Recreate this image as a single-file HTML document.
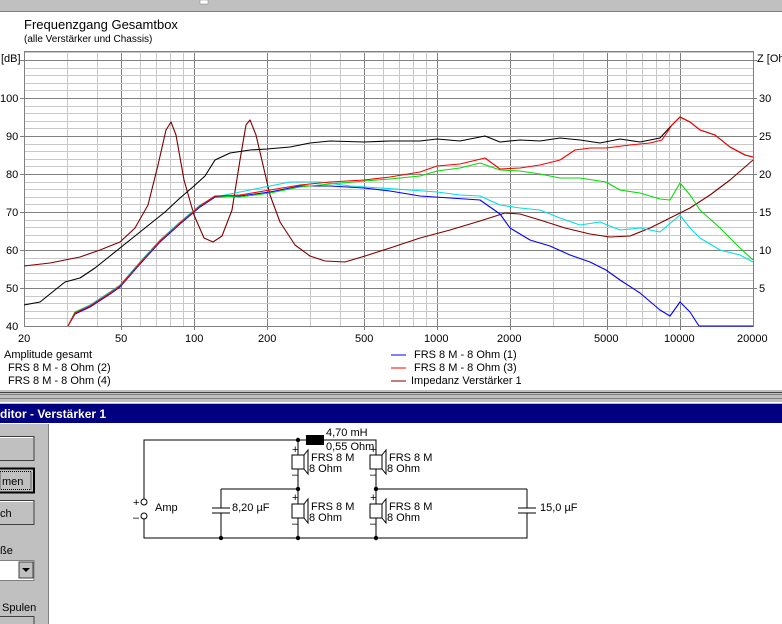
<!DOCTYPE html>
<html><head><meta charset="utf-8"><style>
body{margin:0;width:782px;height:624px;overflow:hidden;background:#fff;font-family:"Liberation Sans",sans-serif}
svg{display:block}
text{font-family:"Liberation Sans",sans-serif;font-size:11px;fill:#000}
</style></head><body>
<svg width="782" height="624" viewBox="0 0 782 624" xmlns="http://www.w3.org/2000/svg">
<rect x="0" y="0" width="782" height="12" fill="#c0c0c0"/>
<line x1="0" y1="11.5" x2="782" y2="11.5" stroke="#808080"/>
<rect x="200" y="0" width="8" height="4" fill="#fff" stroke="#808080" stroke-width="0.5"/>
<text x="24" y="29" style="font-size:13px">Frequenzgang Gesamtbox</text>
<text x="24" y="42" style="font-size:10px">(alle Verstärker und Chassis)</text>
<text x="1" y="62">[dB]</text>
<text x="757" y="62">Z [Ohm]</text>
<g id="grid"></g>
<rect x="24.5" y="51.5" width="729" height="275" fill="none" stroke="#808080"/>
<g font-size="11">
<text x="0" y="102">100</text><text x="6" y="140">90</text><text x="6" y="178">80</text><text x="6" y="216">70</text><text x="6" y="254">60</text><text x="6" y="292">50</text><text x="6" y="330">40</text>
<text x="759" y="102">30</text><text x="759" y="140">25</text><text x="759" y="178">20</text><text x="759" y="216">15</text><text x="759" y="254">10</text><text x="759" y="292">5</text>
<text x="18" y="342">20</text><text x="115" y="342">50</text><text x="185" y="342">100</text><text x="258" y="342">200</text><text x="355" y="342">500</text><text x="424" y="342">1000</text><text x="497" y="342">2000</text><text x="594" y="342">5000</text><text x="664" y="342">10000</text><text x="737" y="342">20000</text>
</g>
<g fill="none" stroke-width="1.1" stroke-linejoin="round">
<polyline stroke="#800000" points="24,266 50,263 80,257 100,250 120,242 135,228 148,205 158,165 166,130 171,122 176,135 184,180 194,215 204,238 213,242 222,236 232,210 240,160 246,125 250,120 256,135 263,165 270,195 280,222 295,245 310,256 325,261 345,262 365,256 390,248 420,238 450,230 480,221 505,213 520,214 540,220 565,228 590,234 610,237 630,236 650,228 670,218 690,208 710,195 730,180 753,160"/>
<polyline stroke="#000" points="24,305 40,302 55,290 65,282 80,278 95,268 110,256 120,248 135,236 150,224 165,212 180,198 194,186 205,176 215,160 230,153 250,150 267,149 290,147 310,143 330,141 364,142 390,141 420,141 437,139 460,141 485,136 500,142 520,140 540,141 560,138 580,140 600,143 620,139 640,142 660,138 672,125 680,117 690,122 700,130 715,135 730,147 745,155 753,157"/>
<polyline stroke="#00e0e0" points="68,326 75,312 90,305 110,292 120,285 140,262 160,240 180,222 200,205 215,197 235,193 260,188 290,182 320,182 350,186 380,188 410,190 437,192 460,195 480,196 500,205 520,208 540,210 560,218 580,225 600,222 620,230 640,228 660,232 680,215 690,228 700,238 720,250 740,255 753,262"/>
<polyline stroke="#0000ff" points="68,326 75,314 90,307 110,294 120,287 140,264 160,242 180,224 200,207 215,197 240,196 270,192 300,186 330,186 364,188 390,191 420,196 450,198 480,200 500,214 510,228 530,240 550,246 570,255 590,262 606,270 620,280 640,293 660,310 670,316 680,302 690,312 699,326 753,326"/>
<polyline stroke="#00e000" points="68,326 75,312 90,306 110,293 120,286 140,263 160,241 180,223 200,206 215,196 240,197 270,193 300,187 330,184 364,181 390,179 420,176 437,171 460,168 480,163 500,170 520,171 540,174 560,178 580,178 606,182 620,190 640,193 660,199 670,200 680,183 690,195 700,210 720,228 740,248 753,260"/>
<polyline stroke="#ff0000" points="68,326 75,313 90,306 110,293 120,286 140,263 160,241 180,223 200,206 215,196 240,195 270,190 300,185 330,182 364,180 390,177 420,172 437,166 460,164 485,158 500,169 520,168 540,165 560,160 575,150 590,148 606,148 630,145 650,143 662,140 672,125 680,117 690,122 700,130 715,135 730,147 745,155 753,157"/>
</g>
<g font-size="10">
<text x="4" y="358">Amplitude gesamt</text><text x="8" y="371">FRS 8 M - 8 Ohm (2)</text><text x="8" y="384">FRS 8 M - 8 Ohm (4)</text>
<line x1="391" y1="355" x2="406" y2="355" stroke="#0000ff"/><text x="414" y="358">FRS 8 M - 8 Ohm (1)</text>
<line x1="391" y1="368" x2="406" y2="368" stroke="#ff0000"/><text x="414" y="371">FRS 8 M - 8 Ohm (3)</text>
<line x1="391" y1="381" x2="406" y2="381" stroke="#800000"/><text x="411" y="384">Impedanz Verstärker 1</text>
</g>
<rect x="0" y="390" width="782" height="14" fill="#c0c0c0"/>
<line x1="0" y1="392.5" x2="782" y2="392.5" stroke="#404040"/>
<line x1="0" y1="394.5" x2="782" y2="394.5" stroke="#808080"/>
<line x1="0" y1="398.5" x2="782" y2="398.5" stroke="#808080"/>
<line x1="0" y1="402.5" x2="782" y2="402.5" stroke="#fff"/>
<rect x="0" y="404" width="782" height="19" fill="#000080"/>
<text x="0" y="418" style="fill:#fff;font-weight:bold;font-size:12px">ditor - Verstärker 1</text>
<rect x="0" y="424" width="49" height="200" fill="#c0c0c0"/>
<line x1="48.5" y1="424" x2="48.5" y2="624" stroke="#808080"/>
<line x1="49.5" y1="424" x2="49.5" y2="624" stroke="#fff"/>
<g stroke-width="1">
<rect x="-2" y="436.5" width="36" height="24" fill="#c0c0c0" stroke="#404040"/><line x1="0" y1="437.5" x2="33" y2="437.5" stroke="#fff"/>
<rect x="-2" y="468.5" width="36" height="24" fill="#c0c0c0" stroke="#000" stroke-width="2"/><rect x="0" y="471.5" width="31" height="18" fill="none" stroke="#000" stroke-dasharray="1 1"/>
<rect x="-2" y="500.5" width="36" height="24" fill="#c0c0c0" stroke="#404040"/><line x1="0" y1="501.5" x2="33" y2="501.5" stroke="#fff"/>
<rect x="-2" y="560.5" width="36" height="20" fill="#fff" stroke="#808080"/>
<rect x="19" y="562" width="14" height="16" fill="#c0c0c0" stroke="#404040"/>
<polygon points="22,568 30,568 26,572" fill="#000"/>
<rect x="-2" y="616.5" width="36" height="20" fill="#c0c0c0" stroke="#404040"/>
</g>
<text x="2" y="485" style="font-size:11px">men</text>
<text x="0" y="517" style="font-size:11px">ch</text>
<text x="0" y="554" style="font-size:11px">ße</text>
<text x="2" y="611" style="font-size:11px">Spulen</text>
<g stroke="#000" fill="none" stroke-width="1">
<polyline points="144,502 144,440 376,440 376,455"/>
<polyline points="144,516 144,538 527,538 527,513"/>
<line x1="527" y1="508" x2="527" y2="489"/>
<line x1="221" y1="489" x2="298" y2="489"/>
<line x1="376" y1="489" x2="527" y2="489"/>
<line x1="221" y1="489" x2="221" y2="508"/><line x1="221" y1="513" x2="221" y2="538"/>
<line x1="212" y1="508" x2="230" y2="508"/><line x1="212" y1="513" x2="230" y2="513"/>
<line x1="518" y1="508" x2="536" y2="508"/><line x1="518" y1="513" x2="536" y2="513"/>
<line x1="298" y1="440" x2="298" y2="538"/>
<line x1="376" y1="455" x2="376" y2="538"/>
<circle cx="144" cy="502" r="3" fill="#fff"/><circle cx="144" cy="516" r="3" fill="#fff"/>
</g>
<rect x="306" y="435" width="18" height="10" fill="#000"/>
<g fill="#000">
<circle cx="298" cy="440" r="2.2"/><circle cx="298" cy="489" r="2.2"/><circle cx="298" cy="538" r="2.2"/>
<circle cx="376" cy="489" r="2.2"/><circle cx="376" cy="538" r="2.2"/><circle cx="221" cy="538" r="2.2"/>
</g>
<g stroke="#000" fill="#fff">
<rect x="292" y="455" width="12" height="14"/><polyline points="304,455 308,450 308,474 304,469" fill="none"/>
<rect x="292" y="504" width="12" height="14"/><polyline points="304,504 308,499 308,523 304,518" fill="none"/>
<rect x="370" y="455" width="12" height="14"/><polyline points="382,455 386,450 386,474 382,469" fill="none"/>
<rect x="370" y="504" width="12" height="14"/><polyline points="382,504 386,499 386,523 382,518" fill="none"/>
</g>
<g font-size="9">
<text x="292" y="453">+</text><text x="292" y="478">–</text><text x="292" y="501">+</text><text x="292" y="527">–</text>
<text x="370" y="453">+</text><text x="370" y="478">–</text><text x="370" y="501">+</text><text x="370" y="527">–</text>
<text x="326" y="436">4,70 mH</text><text x="326" y="450">0,55 Ohm</text>
<text x="311" y="461">FRS 8 M</text><text x="309" y="472">8 Ohm</text>
<text x="311" y="510">FRS 8 M</text><text x="309" y="521">8 Ohm</text>
<text x="389" y="461">FRS 8 M</text><text x="387" y="472">8 Ohm</text>
<text x="389" y="510">FRS 8 M</text><text x="387" y="521">8 Ohm</text>
<text x="232" y="511">8,20 µF</text><text x="540" y="511">15,0 µF</text>
<text x="155" y="511">Amp</text>
<text x="133" y="506">+</text><text x="133" y="521">–</text>
</g>
</svg>
<script>
(function(){
var g=document.getElementById('grid'),ns='http://www.w3.org/2000/svg',s='';
function X(f){return 24+243*Math.log10(f/20);}
var fs=[];for(var d=10;d<=10000;d*=10){for(var k=1;k<=9;k++){var f=k*d;if(f>20&&f<20000)fs.push(f);}}
var maj={50:1,100:1,200:1,500:1,1000:1,2000:1,5000:1,10000:1};
fs.forEach(function(f){var x=Math.round(X(f))+0.5;s+='<line x1="'+x+'" y1="52" x2="'+x+'" y2="'+(maj[f]?330:326)+'" stroke="'+(maj[f]?'#808080':'#c8c8c8')+'"/>';});
for(var db=42;db<=112;db+=2){var y=Math.round(326-(db-40)*3.8)+0.5;var m=db%10==0;s+='<line x1="'+(m?20:24)+'" y1="'+y+'" x2="'+(m?757:753)+'" y2="'+y+'" stroke="'+(m?'#808080':'#c8c8c8')+'"/>';}
g.innerHTML=s;
})();
</script>
</body></html>
